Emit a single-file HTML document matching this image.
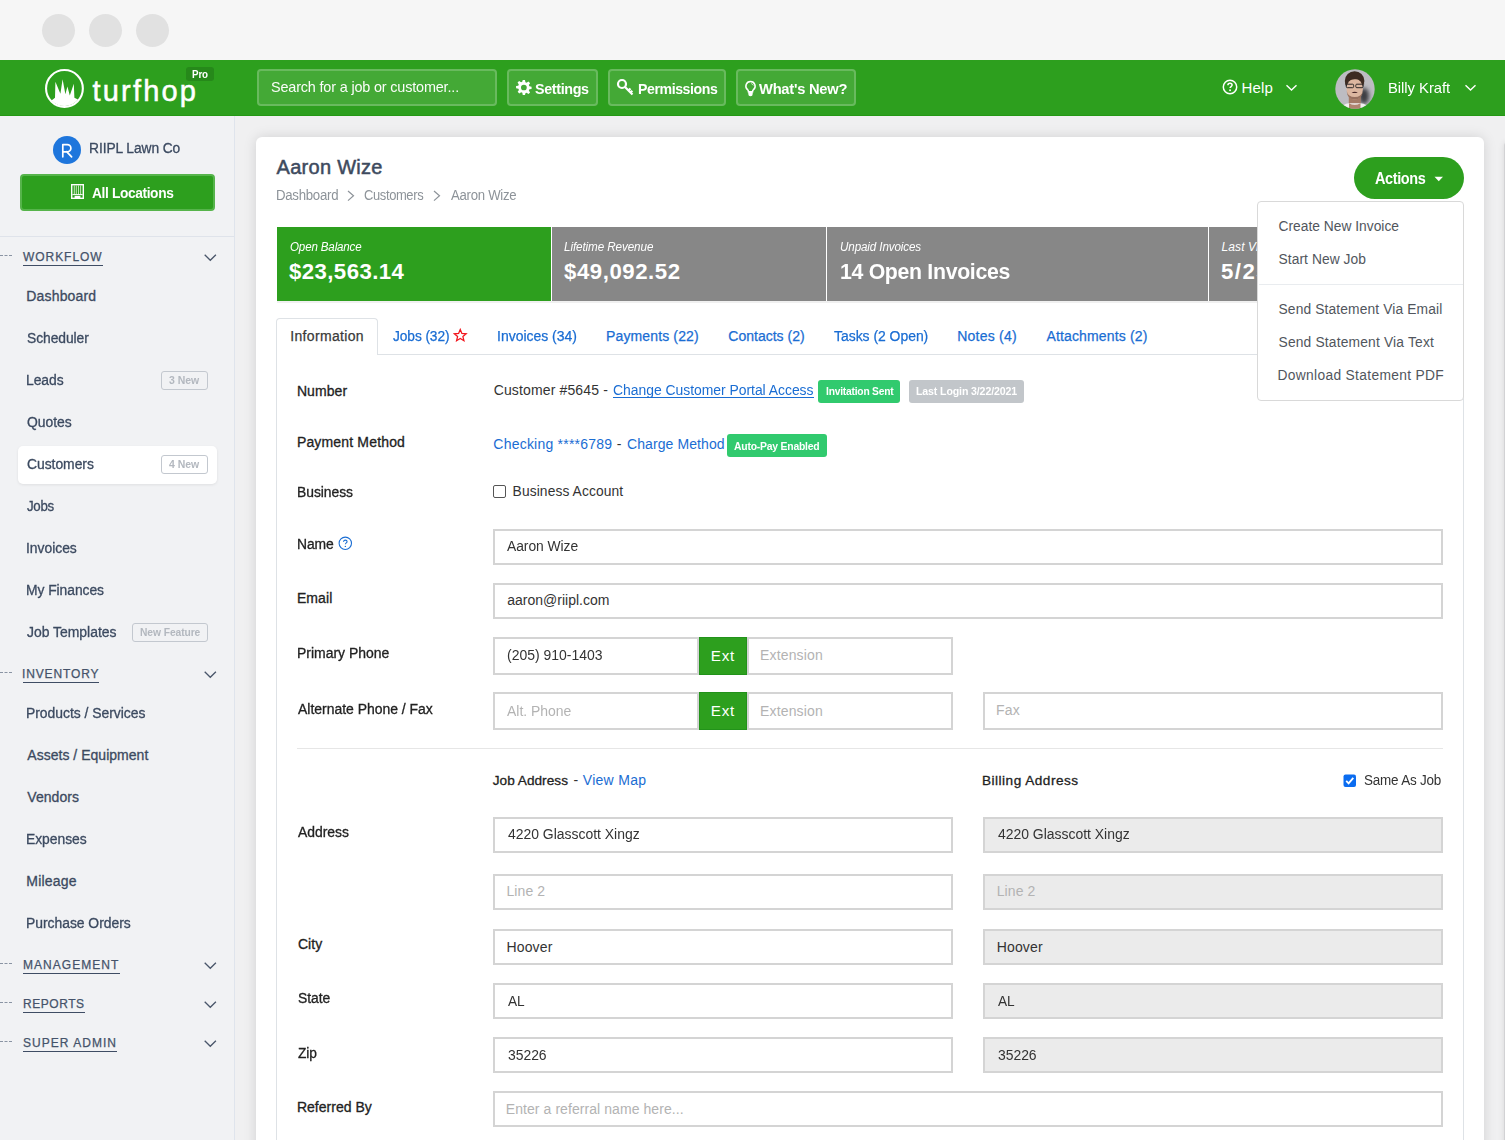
<!DOCTYPE html>
<html><head><meta charset="utf-8">
<style>
*{box-sizing:border-box;margin:0;padding:0}
html,body{width:1505px;height:1140px;overflow:hidden;background:#eff0f2;font-family:"Liberation Sans",sans-serif;position:relative}
.b{position:absolute}
.t{position:absolute;white-space:nowrap;line-height:1}
#chrome{position:absolute;left:0;top:0;width:1505px;height:60px;background:#f6f6f6}
.dot{position:absolute;top:14px;width:33px;height:33px;border-radius:50%;background:#e1e1e1}
#hdr{position:absolute;left:0;top:60px;width:1505px;height:56px;background:#2d9f1e;border-bottom:1px solid #249814}
.hbtn{position:absolute;top:69px;height:37px;border-radius:4px;background:rgba(255,255,255,.11);border:2px solid rgba(255,255,255,.2)}
#side{position:absolute;left:0;top:116px;width:235px;height:1024px;background:#f1f2f4;border-right:1px solid #dfe4ec}
#main{position:absolute;left:235px;top:116px;width:1270px;height:1024px;background:#f0f0f1}
#card{position:absolute;left:256px;top:137px;width:1228px;height:1100px;background:#fff;border-radius:6px;box-shadow:0 0 13px rgba(0,0,0,.13)}
.side{color:#3c4a60}
.sec{color:#45536a;letter-spacing:1px}
.ul{position:absolute;height:1.5px;background:#3f4d64}
.dash{position:absolute;left:0;width:12px;height:0;border-top:1px dashed #8a94a3}
.chev{position:absolute;width:8px;height:8px;border-right:1.3px solid #4a566a;border-bottom:1.3px solid #4a566a;transform:rotate(45deg)}
.badge{position:absolute;height:19px;border:1px solid #c3c8cf;border-radius:3px}
.inp{position:absolute;height:36px;border:2px solid #d4d4d4;background:#fff}
.inp.dis{background:#ebebeb}
.lbl{color:#222}
.link{color:#1a6dd3}
.stat{position:absolute;top:227px;height:74px}
</style></head><body>
<div id="chrome"><div class="dot" style="left:42px"></div><div class="dot" style="left:89px"></div><div class="dot" style="left:136px"></div></div>
<div id="hdr"></div>
<svg class="b" style="left:40px;top:64px" width="50" height="50" viewBox="0 0 50 50">
<circle cx="24.45" cy="24.45" r="18.4" fill="none" stroke="#fff" stroke-width="2.1"/>
<path d="M11.5,36.5 L15,33.8 L15.4,17.8 L20.4,29.8 L22.6,15.2 L25.4,30.3 L27.4,22.6 L29.8,31.6 L33.8,19.8 L34.4,33.8 L38,35.5 A17.5,17.5 0 0 1 11.5,36.5 Z" fill="#fff"/>
</svg>
<span id="t0" class="t " style="left:92.50px;top:77.00px;font-size:29px;color:#fff;letter-spacing:2.191px;-webkit-text-stroke:0.5px #fff;">turfhop</span>
<div class="b" style="left:186px;top:67.3px;width:28px;height:13.5px;border-radius:3px;background:#26891a"></div>
<span id="t1" class="t " style="left:192.00px;top:70.00px;font-size:10px;color:#fff;font-weight:bold;letter-spacing:-0.112px;transform:scaleX(0.9794);transform-origin:0 0;">Pro</span>
<div class="hbtn" style="left:257px;width:240px"></div>
<span id="t2" class="t " style="left:271.00px;top:79.00px;font-size:15px;color:#fafcf9;letter-spacing:-0.170px;transform:scaleX(0.9607);transform-origin:0 0;">Search for a job or customer...</span>
<div class="hbtn" style="left:507px;width:91px"></div>
<div class="hbtn" style="left:608px;width:118px"></div>
<div class="hbtn" style="left:736px;width:120px"></div>
<svg class="b" style="left:515px;top:79px" width="17" height="17" viewBox="0 0 16 16"><path fill="#fff" d="M9.4 1l.4 2.1c.4.1.8.3 1.1.5l1.8-1.2 1.5 1.5-1.2 1.8c.2.4.4.7.5 1.1l2.1.4v2.1l-2.1.4c-.1.4-.3.8-.5 1.1l1.2 1.8-1.5 1.5-1.8-1.2c-.4.2-.7.4-1.1.5L9.4 15H7.3l-.4-2.1c-.4-.1-.8-.3-1.1-.5L4 13.6 2.5 12.1l1.2-1.8c-.2-.4-.4-.7-.5-1.1L1 8.8V6.7l2.1-.4c.1-.4.3-.8.5-1.1L2.4 3.4 3.9 1.9l1.8 1.2c.4-.2.7-.4 1.1-.5L7.3 1h2.1zM8.35 5.3a2.7 2.7 0 100 5.4 2.7 2.7 0 000-5.4z"/></svg>
<span id="t3" class="t " style="left:535.00px;top:81.00px;font-size:15.4px;color:#fff;font-weight:bold;letter-spacing:-0.380px;transform:scaleX(0.9306);transform-origin:0 0;">Settings</span>
<svg class="b" style="left:616px;top:78px" width="19" height="19" viewBox="0 0 19 19"><circle cx="6" cy="6" r="4" fill="none" stroke="#fff" stroke-width="2.2"/><path d="M9 9 L16.5 16.5 M12.5 12.5 L14.5 10.5 M14.5 14.5 L16.3 12.7" stroke="#fff" stroke-width="2.2" fill="none"/></svg>
<span id="t4" class="t " style="left:637.50px;top:81.00px;font-size:15.4px;color:#fff;font-weight:bold;letter-spacing:-0.463px;transform:scaleX(0.9186);transform-origin:0 0;">Permissions</span>
<svg class="b" style="left:744px;top:79.5px" width="13" height="17" viewBox="0 0 13 17"><path d="M6.5 1.5a4.6 4.6 0 0 0-3 8.1c.6.5.9 1.1.9 1.8v.4h4.2v-.4c0-.7.3-1.3.9-1.8A4.6 4.6 0 0 0 6.5 1.5z" fill="none" stroke="#fff" stroke-width="1.5"/><path d="M4.3 11.8h4.4v2.2a2.2 2.2 0 0 1-4.4 0z" fill="#fff"/><path d="M7.3 3.6q1.5.4 2 1.8" stroke="#fff" stroke-width="0.8" fill="none"/></svg>
<span id="t5" class="t " style="left:759.00px;top:81.00px;font-size:15.4px;color:#fff;font-weight:bold;letter-spacing:-0.270px;transform:scaleX(0.9560);transform-origin:0 0;">What's New?</span>
<svg class="b" style="left:1222px;top:78.5px" width="16" height="16" viewBox="0 0 16 16"><circle cx="8" cy="8" r="6.7" fill="none" stroke="#fff" stroke-width="1.5"/><path d="M5.9 6.2c0-1.2.9-2 2.1-2s2.1.8 2.1 1.9c0 1.4-2 1.6-2 3" fill="none" stroke="#fff" stroke-width="1.5"/><circle cx="8.05" cy="11.3" r="0.95" fill="#fff"/></svg>
<span id="t6" class="t " style="left:1241.50px;top:80.00px;font-size:15px;color:#fff;letter-spacing:0.164px;">Help</span>
<svg class="b" style="left:1285px;top:84px" width="13" height="8"><polyline points="1.5,1.2 6.5,6 11.5,1.2" fill="none" stroke="#fff" stroke-width="1.4"/></svg>
<svg class="b" style="left:1335px;top:69px" width="40" height="40" viewBox="0 0 40 40"><defs><clipPath id="ac"><circle cx="20" cy="20" r="19.7"/></clipPath><filter id="bl" x="-20%" y="-20%" width="140%" height="140%"><feGaussianBlur stdDeviation="0.6"/></filter><filter id="bl2" x="-50%" y="-50%" width="200%" height="200%"><feGaussianBlur stdDeviation="2"/></filter></defs>
<g clip-path="url(#ac)"><rect width="40" height="40" fill="#bdbcc2"/>
<ellipse cx="29" cy="27" rx="5" ry="8" fill="#3a3a40" filter="url(#bl2)"/>
<g filter="url(#bl)">
<rect x="13.8" y="25" width="12" height="12" fill="#a47a66"/>
<path d="M5 41 Q8 34.5 14 34.2 L25.5 34.2 Q32 34.5 35 41 Z" fill="#f2f0f0"/>
<path d="M14 34.2 Q19.7 37.5 25.5 34.2 L25.5 41 L14 41Z" fill="#b08470"/>
<ellipse cx="19.6" cy="12" rx="9.8" ry="9.8" fill="#3d2c22"/>
<ellipse cx="19.7" cy="20" rx="8.2" ry="10.6" fill="#dcb6a0"/>
<path d="M11.6 22 Q12.5 30.6 19.7 30.6 Q27 30.6 27.8 22 Q26.5 28 19.7 28 Q13 28 11.6 22Z" fill="#97705e"/>
<path d="M10.2 16.5 Q9.8 5.5 19.6 5 Q29.5 5.5 29.2 15.5 Q27 9.8 19.6 10.2 Q12.5 10.2 10.2 16.5Z" fill="#3d2c22"/>
<rect x="11.3" y="15.2" width="7.3" height="3.5" rx="1" fill="none" stroke="#2d2828" stroke-width="1"/>
<rect x="20.8" y="15.2" width="7.3" height="3.5" rx="1" fill="none" stroke="#2d2828" stroke-width="1"/>
<path d="M16.6 23.4 Q19.7 22.2 22.8 23.4 Q19.7 24.7 16.6 23.4Z" fill="#4a2a2a"/>
</g></g></svg>
<span id="t7" class="t " style="left:1388.00px;top:80.00px;font-size:15px;color:#fff;letter-spacing:-0.047px;transform:scaleX(0.9887);transform-origin:0 0;">Billy Kraft</span>
<svg class="b" style="left:1464px;top:84px" width="13" height="8"><polyline points="1.5,1.2 6.5,6 11.5,1.2" fill="none" stroke="#fff" stroke-width="1.4"/></svg>
<div id="side"></div>
<div class="b" style="left:53px;top:136px;width:28px;height:28px;border-radius:50%;background:#1e76dc"></div>
<svg class="b" style="left:53px;top:136px" width="28" height="28"><path d="M9.8 20.8 V8.6 H14.3 A3.6 3.6 0 0 1 14.3 15.8 H10.2 M13.6 15.6 L18.6 20.8" fill="none" stroke="#fff" stroke-width="1.7" stroke-linecap="round" stroke-linejoin="round"/></svg>
<span id="t8" class="t " style="left:89.00px;top:141.00px;font-size:14px;color:#3c4a60;letter-spacing:-0.079px;transform:scaleX(0.9846);transform-origin:0 0;-webkit-text-stroke:0.3px #3c4a60;">RIIPL Lawn Co</span>
<div class="b" style="left:20px;top:174px;width:195px;height:37px;border-radius:4px;background:#2d9f1e;border:2px solid #56b44b"></div>
<svg class="b" style="left:71px;top:184px" width="13" height="15" viewBox="0 0 13 15"><rect x="0.7" y="0.7" width="11.6" height="13.6" fill="none" stroke="#fff" stroke-width="1.4"/><path d="M3.3 1.5v9M5.3 1.5v9M7.5 1.5v9M9.6 1.5v9" stroke="#e8f5e0" stroke-width="0.8"/><path d="M1.4 10.6h10.2" stroke="#fff" stroke-width="1"/><rect x="3.6" y="11.8" width="5.8" height="2.6" fill="#fff"/></svg>
<span id="t9" class="t " style="left:91.50px;top:185.00px;font-size:15px;color:#fff;font-weight:bold;letter-spacing:-0.411px;transform:scaleX(0.9168);transform-origin:0 0;">All Locations</span>
<div class="b" style="left:0;top:236px;width:234px;height:1px;background:#dfe3ea"></div>
<div class="dash" style="top:254.8px"></div>
<span id="t10" class="t " style="left:23.00px;top:251.00px;font-size:12px;color:#45536a;letter-spacing:0.947px;-webkit-text-stroke:0.25px #45536a;">WORKFLOW</span>
<div class="ul" style="left:23px;top:264.5px;width:80.0px"></div>
<svg class="b" style="left:204px;top:254px" width="13" height="8"><polyline points="0.7,0.7 6.3,6.3 11.9,0.7" fill="none" stroke="#4a566a" stroke-width="1.3"/></svg>
<span id="t11" class="t " style="left:26.30px;top:289.00px;font-size:14px;color:#3c4a60;letter-spacing:0.162px;-webkit-text-stroke:0.3px #3c4a60;">Dashboard</span>
<span id="t12" class="t " style="left:27.30px;top:331.00px;font-size:14px;color:#3c4a60;letter-spacing:-0.059px;transform:scaleX(0.9888);transform-origin:0 0;-webkit-text-stroke:0.3px #3c4a60;">Scheduler</span>
<span id="t13" class="t " style="left:26.30px;top:373.00px;font-size:14px;color:#3c4a60;letter-spacing:-0.054px;transform:scaleX(0.9912);transform-origin:0 0;-webkit-text-stroke:0.3px #3c4a60;">Leads</span>
<div class="badge" style="left:161.3px;top:371px;width:46.29999999999998px"></div>
<span id="t14" class="t " style="left:168.70px;top:375.00px;font-size:10.5px;color:#b3b8bf;font-weight:bold;letter-spacing:-0.008px;transform:scaleX(0.9985);transform-origin:0 0;">3 New</span>
<span id="t15" class="t " style="left:27.30px;top:415.00px;font-size:14px;color:#3c4a60;letter-spacing:-0.043px;transform:scaleX(0.9928);transform-origin:0 0;-webkit-text-stroke:0.3px #3c4a60;">Quotes</span>
<div class="b" style="left:18px;top:446px;width:199px;height:38px;border-radius:5px;background:#fff;box-shadow:0 1px 3px rgba(0,0,0,.08)"></div>
<span id="t16" class="t " style="left:27.30px;top:457.00px;font-size:14px;color:#3c4a60;letter-spacing:-0.039px;transform:scaleX(0.9930);transform-origin:0 0;-webkit-text-stroke:0.3px #3c4a60;">Customers</span>
<div class="badge" style="left:161.3px;top:455px;width:46.29999999999998px"></div>
<span id="t17" class="t " style="left:168.70px;top:459.00px;font-size:10.5px;color:#b3b8bf;font-weight:bold;letter-spacing:-0.008px;transform:scaleX(0.9985);transform-origin:0 0;">4 New</span>
<span id="t18" class="t " style="left:27.30px;top:499.00px;font-size:14px;color:#3c4a60;letter-spacing:-0.316px;transform:scaleX(0.9503);transform-origin:0 0;-webkit-text-stroke:0.3px #3c4a60;">Jobs</span>
<span id="t19" class="t " style="left:26.30px;top:541.00px;font-size:14px;color:#3c4a60;letter-spacing:-0.032px;transform:scaleX(0.9933);transform-origin:0 0;-webkit-text-stroke:0.3px #3c4a60;">Invoices</span>
<span id="t20" class="t " style="left:26.30px;top:583.00px;font-size:14px;color:#3c4a60;letter-spacing:-0.054px;transform:scaleX(0.9895);transform-origin:0 0;-webkit-text-stroke:0.3px #3c4a60;">My Finances</span>
<span id="t21" class="t " style="left:27.30px;top:625.00px;font-size:14px;color:#3c4a60;letter-spacing:-0.019px;transform:scaleX(0.9962);transform-origin:0 0;-webkit-text-stroke:0.3px #3c4a60;">Job Templates</span>
<div class="badge" style="left:132.3px;top:623px;width:75.29999999999998px"></div>
<span id="t22" class="t " style="left:139.70px;top:627.00px;font-size:10.5px;color:#b3b8bf;font-weight:bold;letter-spacing:-0.084px;transform:scaleX(0.9796);transform-origin:0 0;">New Feature</span>
<div class="dash" style="top:671.8px"></div>
<span id="t23" class="t " style="left:22.00px;top:668.00px;font-size:12px;color:#45536a;letter-spacing:0.866px;-webkit-text-stroke:0.25px #45536a;">INVENTORY</span>
<div class="ul" style="left:23px;top:681.5px;width:76.2px"></div>
<svg class="b" style="left:204px;top:671px" width="13" height="8"><polyline points="0.7,0.7 6.3,6.3 11.9,0.7" fill="none" stroke="#4a566a" stroke-width="1.3"/></svg>
<span id="t24" class="t " style="left:26.30px;top:706.00px;font-size:14px;color:#3c4a60;letter-spacing:-0.027px;transform:scaleX(0.9940);transform-origin:0 0;-webkit-text-stroke:0.3px #3c4a60;">Products / Services</span>
<span id="t25" class="t " style="left:27.30px;top:748.00px;font-size:14px;color:#3c4a60;letter-spacing:0.022px;-webkit-text-stroke:0.3px #3c4a60;">Assets / Equipment</span>
<span id="t26" class="t " style="left:27.30px;top:790.00px;font-size:14px;color:#3c4a60;letter-spacing:0.055px;-webkit-text-stroke:0.3px #3c4a60;">Vendors</span>
<span id="t27" class="t " style="left:26.30px;top:832.00px;font-size:14px;color:#3c4a60;letter-spacing:-0.045px;transform:scaleX(0.9922);transform-origin:0 0;-webkit-text-stroke:0.3px #3c4a60;">Expenses</span>
<span id="t28" class="t " style="left:26.30px;top:874.00px;font-size:14px;color:#3c4a60;letter-spacing:0.193px;-webkit-text-stroke:0.3px #3c4a60;">Mileage</span>
<span id="t29" class="t " style="left:26.30px;top:916.00px;font-size:14px;color:#3c4a60;letter-spacing:-0.032px;transform:scaleX(0.9936);transform-origin:0 0;-webkit-text-stroke:0.3px #3c4a60;">Purchase Orders</span>
<div class="dash" style="top:963.0px"></div>
<span id="t30" class="t " style="left:23.00px;top:959.00px;font-size:12px;color:#45536a;letter-spacing:1.036px;-webkit-text-stroke:0.25px #45536a;">MANAGEMENT</span>
<div class="ul" style="left:23px;top:972.7px;width:96.7px"></div>
<svg class="b" style="left:204px;top:962.2px" width="13" height="8"><polyline points="0.7,0.7 6.3,6.3 11.9,0.7" fill="none" stroke="#4a566a" stroke-width="1.3"/></svg>
<div class="dash" style="top:1002.0px"></div>
<span id="t31" class="t " style="left:23.00px;top:998.00px;font-size:12px;color:#45536a;letter-spacing:0.535px;-webkit-text-stroke:0.25px #45536a;">REPORTS</span>
<div class="ul" style="left:23px;top:1011.7px;width:61.7px"></div>
<svg class="b" style="left:204px;top:1001.2px" width="13" height="8"><polyline points="0.7,0.7 6.3,6.3 11.9,0.7" fill="none" stroke="#4a566a" stroke-width="1.3"/></svg>
<div class="dash" style="top:1041.0px"></div>
<span id="t32" class="t " style="left:23.00px;top:1037.00px;font-size:12px;color:#45536a;letter-spacing:1.032px;-webkit-text-stroke:0.25px #45536a;">SUPER ADMIN</span>
<div class="ul" style="left:23px;top:1050.7px;width:93.7px"></div>
<svg class="b" style="left:204px;top:1040.2px" width="13" height="8"><polyline points="0.7,0.7 6.3,6.3 11.9,0.7" fill="none" stroke="#4a566a" stroke-width="1.3"/></svg>
<div id="main"></div>
<div id="card"></div>
<div class="b" style="left:1503.5px;top:142px;width:10px;height:1100px;background:#d2d2d4;border-radius:4px;box-shadow:0 0 6px rgba(0,0,0,.10)"></div>
<span id="t33" class="t " style="left:276.60px;top:157.00px;font-size:20px;color:#3d4a5e;letter-spacing:0.273px;-webkit-text-stroke:0.5px #3d4a5e;">Aaron Wize</span>
<span id="t34" class="t " style="left:275.60px;top:188.00px;font-size:14px;color:#8d9399;letter-spacing:-0.295px;transform:scaleX(0.9450);transform-origin:0 0;">Dashboard</span>
<svg class="b" style="left:347px;top:190px" width="9" height="12"><polyline points="1,1 6.5,5.8 1,10.6" fill="none" stroke="#8d9399" stroke-width="1.2"/></svg>
<span id="t35" class="t " style="left:364.20px;top:188.00px;font-size:14px;color:#8d9399;letter-spacing:-0.404px;transform:scaleX(0.9248);transform-origin:0 0;">Customers</span>
<svg class="b" style="left:433px;top:190px" width="9" height="12"><polyline points="1,1 6.5,5.8 1,10.6" fill="none" stroke="#8d9399" stroke-width="1.2"/></svg>
<span id="t36" class="t " style="left:450.90px;top:188.00px;font-size:14px;color:#8d9399;letter-spacing:-0.301px;transform:scaleX(0.9418);transform-origin:0 0;">Aaron Wize</span>
<div class="stat" style="left:277px;width:274px;background:#2d9f1e"></div>
<div class="stat" style="left:552px;width:274px;background:#878787"></div>
<div class="stat" style="left:827px;width:381px;background:#878787"></div>
<div class="stat" style="left:1209px;width:254px;background:#878787"></div>
<div class="b" style="left:277px;top:301px;width:1186px;height:2px;background:#f0f0f0"></div>
<span id="t37" class="t " style="left:290.00px;top:241.00px;font-size:12px;color:#fff;font-style:italic;letter-spacing:-0.159px;transform:scaleX(0.9648);transform-origin:0 0;">Open Balance</span>
<span id="t38" class="t " style="left:289.00px;top:261.00px;font-size:22.2px;color:#fff;font-weight:bold;letter-spacing:0.422px;">$23,563.14</span>
<span id="t39" class="t " style="left:564.30px;top:241.00px;font-size:12px;color:#fff;font-style:italic;letter-spacing:-0.107px;transform:scaleX(0.9739);transform-origin:0 0;">Lifetime Revenue</span>
<span id="t40" class="t " style="left:564.00px;top:261.00px;font-size:22.2px;color:#fff;font-weight:bold;letter-spacing:0.555px;">$49,092.52</span>
<span id="t41" class="t " style="left:840.00px;top:241.00px;font-size:12px;color:#fff;font-style:italic;letter-spacing:-0.120px;transform:scaleX(0.9700);transform-origin:0 0;">Unpaid Invoices</span>
<span id="t42" class="t " style="left:839.50px;top:261.00px;font-size:22.2px;color:#fff;font-weight:bold;letter-spacing:-0.324px;transform:scaleX(0.9586);transform-origin:0 0;">14 Open Invoices</span>
<span id="t43" class="t " style="left:1221.50px;top:241.00px;font-size:12px;color:#fff;font-style:italic;letter-spacing:0.096px;">Last Visit</span>
<span id="t44" class="t " style="left:1221.00px;top:261.00px;font-size:22.2px;color:#fff;font-weight:bold;letter-spacing:1.454px;">5/25/2021</span>
<div class="b" style="left:276px;top:318px;width:102px;height:37px;border:1px solid #dee2e6;border-bottom:none;border-radius:4px 4px 0 0;background:#fff"></div>
<div class="b" style="left:377px;top:354px;width:1087px;height:1px;background:#dee2e6"></div>
<div class="b" style="left:276px;top:354px;width:1188px;height:800px;border-left:1px solid #dee2e6;border-right:1px solid #dee2e6"></div>
<span id="t45" class="t " style="left:290.30px;top:329.00px;font-size:14px;color:#3a3a3a;letter-spacing:0.325px;-webkit-text-stroke:0.25px #3a3a3a;">Information</span>
<span id="t46" class="t " style="left:392.80px;top:329.00px;font-size:14px;color:#1a6dd3;letter-spacing:-0.090px;transform:scaleX(0.9811);transform-origin:0 0;-webkit-text-stroke:0.25px #1a6dd3;">Jobs (32)</span>
<svg class="b" style="left:453.3px;top:328.3px" width="14.5" height="14.5" viewBox="0 0 24 24"><path d="M12 2.5l2.7 6.6 7.1.5-5.4 4.6 1.7 6.9L12 17.3l-6.1 3.8 1.7-6.9L2.2 9.6l7.1-.5z" fill="none" stroke="#f2141c" stroke-width="2.1" stroke-linejoin="miter"/></svg>
<span id="t47" class="t " style="left:496.60px;top:329.00px;font-size:14px;color:#1a6dd3;letter-spacing:-0.006px;transform:scaleX(0.9986);transform-origin:0 0;-webkit-text-stroke:0.25px #1a6dd3;">Invoices (34)</span>
<span id="t48" class="t " style="left:606.00px;top:329.00px;font-size:14px;color:#1a6dd3;letter-spacing:0.136px;-webkit-text-stroke:0.25px #1a6dd3;">Payments (22)</span>
<span id="t49" class="t " style="left:728.30px;top:329.00px;font-size:14px;color:#1a6dd3;letter-spacing:0.010px;-webkit-text-stroke:0.25px #1a6dd3;">Contacts (2)</span>
<span id="t50" class="t " style="left:834.30px;top:329.00px;font-size:14px;color:#1a6dd3;letter-spacing:-0.020px;transform:scaleX(0.9958);transform-origin:0 0;-webkit-text-stroke:0.25px #1a6dd3;">Tasks (2 Open)</span>
<span id="t51" class="t " style="left:957.20px;top:329.00px;font-size:14px;color:#1a6dd3;letter-spacing:0.236px;-webkit-text-stroke:0.25px #1a6dd3;">Notes (4)</span>
<span id="t52" class="t " style="left:1046.40px;top:329.00px;font-size:14px;color:#1a6dd3;letter-spacing:0.161px;-webkit-text-stroke:0.25px #1a6dd3;">Attachments (2)</span>
<span id="t53" class="t " style="left:296.90px;top:384.00px;font-size:14px;color:#222;letter-spacing:0.074px;-webkit-text-stroke:0.3px #222;">Number</span>
<span id="t54" class="t " style="left:296.90px;top:435.00px;font-size:14px;color:#222;letter-spacing:0.166px;-webkit-text-stroke:0.3px #222;">Payment Method</span>
<span id="t55" class="t " style="left:296.90px;top:485.00px;font-size:14px;color:#222;letter-spacing:-0.046px;transform:scaleX(0.9913);transform-origin:0 0;-webkit-text-stroke:0.3px #222;">Business</span>
<span id="t56" class="t " style="left:296.90px;top:537.00px;font-size:14px;color:#222;letter-spacing:-0.074px;transform:scaleX(0.9908);transform-origin:0 0;-webkit-text-stroke:0.3px #222;">Name</span>
<span id="t57" class="t " style="left:296.90px;top:591.00px;font-size:14px;color:#222;letter-spacing:0.101px;-webkit-text-stroke:0.3px #222;">Email</span>
<span id="t58" class="t " style="left:296.90px;top:646.00px;font-size:14px;color:#222;letter-spacing:-0.010px;transform:scaleX(0.9980);transform-origin:0 0;-webkit-text-stroke:0.3px #222;">Primary Phone</span>
<span id="t59" class="t " style="left:297.90px;top:702.00px;font-size:14px;color:#222;letter-spacing:-0.012px;transform:scaleX(0.9973);transform-origin:0 0;-webkit-text-stroke:0.3px #222;">Alternate Phone / Fax</span>
<span id="t60" class="t " style="left:297.90px;top:825.00px;font-size:14px;color:#222;letter-spacing:-0.031px;transform:scaleX(0.9946);transform-origin:0 0;-webkit-text-stroke:0.3px #222;">Address</span>
<span id="t61" class="t " style="left:297.90px;top:937.00px;font-size:14px;color:#222;letter-spacing:0.063px;-webkit-text-stroke:0.3px #222;">City</span>
<span id="t62" class="t " style="left:297.90px;top:991.00px;font-size:14px;color:#222;letter-spacing:-0.040px;transform:scaleX(0.9926);transform-origin:0 0;-webkit-text-stroke:0.3px #222;">State</span>
<span id="t63" class="t " style="left:297.90px;top:1046.00px;font-size:14px;color:#222;letter-spacing:-0.112px;transform:scaleX(0.9826);transform-origin:0 0;-webkit-text-stroke:0.3px #222;">Zip</span>
<span id="t64" class="t " style="left:296.90px;top:1100.00px;font-size:14px;color:#222;letter-spacing:0.020px;-webkit-text-stroke:0.3px #222;">Referred By</span>
<span id="t65" class="t " style="left:493.70px;top:383.00px;font-size:14px;color:#333;letter-spacing:0.140px;">Customer #5645 -</span>
<span id="t66" class="t " style="left:612.80px;top:383.00px;font-size:14px;color:#1a6dd3;letter-spacing:-0.026px;transform:scaleX(0.9947);transform-origin:0 0;">Change Customer Portal Access</span>
<div class="b" style="left:612.8px;top:396.5px;width:201.5px;height:1px;background:#1a6dd3"></div>
<div class="b" style="left:818px;top:380.4px;width:82px;height:22.3px;border-radius:3px;background:#31ca6e"></div>
<span id="t67" class="t " style="left:825.50px;top:386.00px;font-size:11px;color:#fff;font-weight:bold;letter-spacing:-0.232px;transform:scaleX(0.9332);transform-origin:0 0;">Invitation Sent</span>
<div class="b" style="left:909px;top:380.4px;width:115px;height:22.3px;border-radius:3px;background:#c2c6ca"></div>
<span id="t68" class="t " style="left:916.00px;top:386.00px;font-size:11px;color:#fff;font-weight:bold;letter-spacing:-0.136px;transform:scaleX(0.9629);transform-origin:0 0;">Last Login 3/22/2021</span>
<span id="t69" class="t " style="left:493.30px;top:437.00px;font-size:14px;color:#1a6dd3;letter-spacing:0.225px;">Checking ****6789</span>
<span id="t70" class="t " style="left:616.80px;top:437.00px;font-size:14px;color:#333;">-</span>
<span id="t71" class="t " style="left:627.00px;top:437.00px;font-size:14px;color:#1a6dd3;letter-spacing:0.090px;">Charge Method</span>
<div class="b" style="left:726.7px;top:434px;width:100px;height:22.7px;border-radius:3px;background:#31ca6e"></div>
<span id="t72" class="t " style="left:734.00px;top:441.00px;font-size:11px;color:#fff;font-weight:bold;letter-spacing:-0.224px;transform:scaleX(0.9440);transform-origin:0 0;">Auto-Pay Enabled</span>
<div class="b" style="left:493px;top:485.2px;width:12.8px;height:12.6px;border:1px solid #555;border-radius:2px;background:#fff"></div>
<span id="t73" class="t " style="left:512.60px;top:485.00px;font-size:13.8px;color:#333;letter-spacing:0.104px;">Business Account</span>
<div class="inp" style="left:493px;top:528.5px;width:950px;height:36px"></div>
<svg class="b" style="left:338px;top:535.8px" width="15" height="15" viewBox="0 0 15 15"><circle cx="7.3" cy="7.3" r="6.2" fill="none" stroke="#1a6dd3" stroke-width="1.1"/><path d="M5.5 5.8c0-1 .8-1.7 1.8-1.7s1.8.7 1.8 1.6c0 1.2-1.7 1.3-1.7 2.6" fill="none" stroke="#1a6dd3" stroke-width="1.1"/><circle cx="7.35" cy="10.4" r="0.7" fill="#1a6dd3"/></svg>
<span id="t74" class="t " style="left:507.30px;top:539.00px;font-size:14px;color:#333;letter-spacing:-0.052px;transform:scaleX(0.9902);transform-origin:0 0;">Aaron Wize</span>
<div class="inp" style="left:493px;top:582.5px;width:950px;height:36px"></div>
<span id="t75" class="t " style="left:507.30px;top:593.00px;font-size:14px;color:#333;letter-spacing:0.002px;">aaron@riipl.com</span>
<div class="inp" style="left:493px;top:637px;width:206px;height:37.6px"></div>
<div class="inp" style="left:747px;top:637px;width:206px;height:37.6px"></div>
<div class="b" style="left:698.7px;top:637px;width:48.5px;height:37.6px;background:#2d9f1e;border:1px solid #22921a"></div>
<span id="t76" class="t " style="left:507.00px;top:648.00px;font-size:14px;color:#333;letter-spacing:-0.008px;transform:scaleX(0.9984);transform-origin:0 0;">(205) 910-1403</span>
<span id="t77" class="t " style="left:710.80px;top:648.00px;font-size:15.2px;color:#fff;letter-spacing:0.738px;">Ext</span>
<span id="t78" class="t " style="left:760.00px;top:648.00px;font-size:14px;color:#b3b3b3;letter-spacing:0.163px;">Extension</span>
<div class="inp" style="left:493px;top:692.3px;width:206px;height:37.4px"></div>
<div class="inp" style="left:747px;top:692.3px;width:206px;height:37.4px"></div>
<div class="b" style="left:698.7px;top:692.3px;width:48.5px;height:37.4px;background:#2d9f1e;border:1px solid #22921a"></div>
<span id="t79" class="t " style="left:507.00px;top:704.00px;font-size:14px;color:#b3b3b3;letter-spacing:-0.009px;transform:scaleX(0.9980);transform-origin:0 0;">Alt. Phone</span>
<span id="t80" class="t " style="left:710.80px;top:703.00px;font-size:15.2px;color:#fff;letter-spacing:0.738px;">Ext</span>
<span id="t81" class="t " style="left:760.00px;top:704.00px;font-size:14px;color:#b3b3b3;letter-spacing:0.163px;">Extension</span>
<div class="inp" style="left:983.3px;top:692.3px;width:460px;height:37.4px"></div>
<span id="t82" class="t " style="left:996.00px;top:703.00px;font-size:14px;color:#b3b3b3;letter-spacing:0.231px;">Fax</span>
<div class="b" style="left:297px;top:748px;width:1146px;height:1px;background:#e6e6e6"></div>
<span id="t83" class="t " style="left:492.70px;top:774.00px;font-size:13.6px;color:#222;letter-spacing:0.043px;-webkit-text-stroke:0.3px #222;">Job Address</span>
<span id="t84" class="t " style="left:573.50px;top:773.00px;font-size:14px;color:#333;">-</span>
<span id="t85" class="t " style="left:582.80px;top:773.00px;font-size:14px;color:#1a6dd3;letter-spacing:0.281px;">View Map</span>
<span id="t86" class="t " style="left:982.00px;top:774.00px;font-size:13.6px;color:#222;letter-spacing:0.492px;-webkit-text-stroke:0.3px #222;">Billing Address</span>
<svg class="b" style="left:1343px;top:774px" width="14" height="14" viewBox="0 0 14 14"><rect x="0.5" y="0.5" width="12.5" height="12.5" rx="2" fill="#0b6cf0"/><path d="M3.2 6.9 L5.6 9.4 L10.3 3.8" fill="none" stroke="#fff" stroke-width="1.8"/></svg>
<span id="t87" class="t " style="left:1364.00px;top:773.00px;font-size:14px;color:#333;letter-spacing:-0.211px;transform:scaleX(0.9611);transform-origin:0 0;">Same As Job</span>
<div class="inp" style="left:493px;top:816.5px;width:460px;height:36px"></div>
<div class="inp dis" style="left:983.3px;top:816.5px;width:460px;height:36px"></div>
<span id="t88" class="t " style="left:507.50px;top:827.00px;font-size:14px;color:#333;letter-spacing:-0.013px;transform:scaleX(0.9973);transform-origin:0 0;">4220 Glasscott Xingz</span>
<span id="t89" class="t " style="left:997.70px;top:827.00px;font-size:14px;color:#333;letter-spacing:-0.013px;transform:scaleX(0.9973);transform-origin:0 0;">4220 Glasscott Xingz</span>
<div class="inp" style="left:493px;top:873.5px;width:460px;height:36px"></div>
<div class="inp dis" style="left:983.3px;top:873.5px;width:460px;height:36px"></div>
<span id="t90" class="t " style="left:506.50px;top:884.00px;font-size:14px;color:#b3b3b3;letter-spacing:0.088px;">Line 2</span>
<span id="t91" class="t " style="left:996.70px;top:884.00px;font-size:14px;color:#b3b3b3;letter-spacing:0.088px;">Line 2</span>
<div class="inp" style="left:493px;top:928.8px;width:460px;height:36px"></div>
<div class="inp dis" style="left:983.3px;top:928.8px;width:460px;height:36px"></div>
<span id="t92" class="t " style="left:506.50px;top:940.00px;font-size:14px;color:#333;letter-spacing:0.146px;">Hoover</span>
<span id="t93" class="t " style="left:996.70px;top:940.00px;font-size:14px;color:#333;letter-spacing:0.146px;">Hoover</span>
<div class="inp" style="left:493px;top:982.8px;width:460px;height:36px"></div>
<div class="inp dis" style="left:983.3px;top:982.8px;width:460px;height:36px"></div>
<span id="t94" class="t " style="left:507.50px;top:994.00px;font-size:14px;color:#333;letter-spacing:-0.255px;transform:scaleX(0.9776);transform-origin:0 0;">AL</span>
<span id="t95" class="t " style="left:997.70px;top:994.00px;font-size:14px;color:#333;letter-spacing:-0.255px;transform:scaleX(0.9776);transform-origin:0 0;">AL</span>
<div class="inp" style="left:493px;top:1037.4px;width:460px;height:36px"></div>
<div class="inp dis" style="left:983.3px;top:1037.4px;width:460px;height:36px"></div>
<span id="t96" class="t " style="left:507.50px;top:1048.00px;font-size:14px;color:#333;letter-spacing:-0.034px;transform:scaleX(0.9947);transform-origin:0 0;">35226</span>
<span id="t97" class="t " style="left:997.70px;top:1048.00px;font-size:14px;color:#333;letter-spacing:-0.034px;transform:scaleX(0.9947);transform-origin:0 0;">35226</span>
<div class="inp" style="left:493px;top:1091.4px;width:950px;height:36px"></div>
<span id="t98" class="t " style="left:505.80px;top:1102.00px;font-size:14px;color:#b3b3b3;letter-spacing:0.069px;">Enter a referral name here...</span>
<div class="b" style="left:1257px;top:201px;width:207px;height:200px;border:1px solid #d9d9d9;border-radius:4px;background:#fff"></div>
<div class="b" style="left:1258.5px;top:284px;width:204px;height:1px;background:#e9ecef"></div>
<span id="t99" class="t " style="left:1278.50px;top:220.00px;font-size:13.8px;color:#51565d;letter-spacing:0.005px;">Create New Invoice</span>
<span id="t100" class="t " style="left:1278.50px;top:253.00px;font-size:13.8px;color:#51565d;letter-spacing:0.069px;">Start New Job</span>
<span id="t101" class="t " style="left:1278.50px;top:303.00px;font-size:13.8px;color:#51565d;letter-spacing:0.129px;">Send Statement Via Email</span>
<span id="t102" class="t " style="left:1278.50px;top:336.00px;font-size:13.8px;color:#51565d;letter-spacing:0.179px;">Send Statement Via Text</span>
<span id="t103" class="t " style="left:1277.50px;top:369.00px;font-size:13.8px;color:#51565d;letter-spacing:0.320px;">Download Statement PDF</span>
<div class="b" style="left:1354px;top:157px;width:110px;height:42px;border-radius:21px;background:#2d9f1e"></div>
<span id="t104" class="t " style="left:1375.00px;top:171.00px;font-size:15.6px;color:#fff;font-weight:bold;letter-spacing:-0.434px;transform:scaleX(0.9289);transform-origin:0 0;">Actions</span>
<svg class="b" style="left:1434px;top:176px" width="10" height="6"><path d="M0.5 0.8 L9 0.8 L4.75 5.2Z" fill="#fff"/></svg>
</body></html>
